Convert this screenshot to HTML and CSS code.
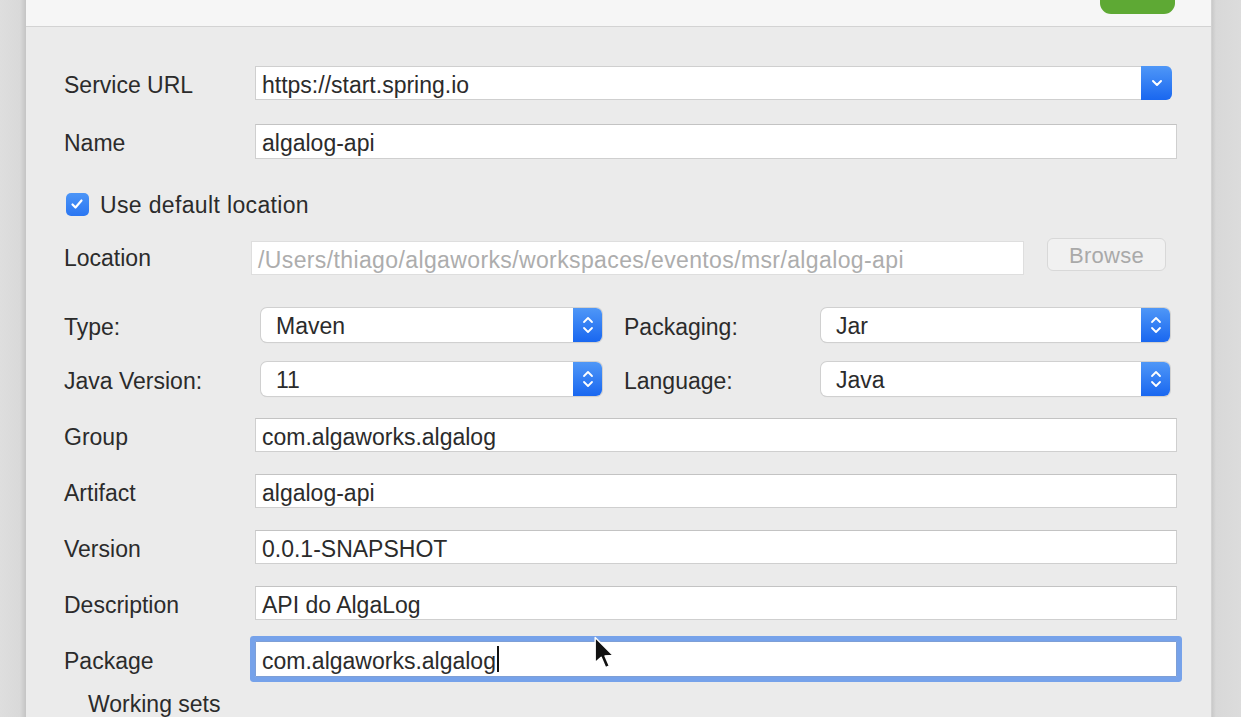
FILE: index.html
```html
<!DOCTYPE html>
<html>
<head>
<meta charset="utf-8">
<link rel="stylesheet" href="styles.css">
</head>
<body>
<div class="screen">
  <div class="side side-left"></div>
  <div class="dialog">
    <div class="header"><div class="finish-btn"></div></div>
    <div class="content">
      <div class="row r-url">
        <div class="label">Service URL</div>
        <div class="combo">
          <div class="combo-text">https://start.spring.io</div>
          <div class="combo-btn">
            <svg width="14" height="10" viewBox="0 0 14 10"><path d="M3 3 L7 7 L11 3" fill="none" stroke="#fff" stroke-width="2" stroke-linecap="round" stroke-linejoin="round"/></svg>
          </div>
        </div>
      </div>
      <div class="row r-name">
        <div class="label">Name</div>
        <div class="field">algalog-api</div>
      </div>
      <div class="row r-check">
        <div class="checkbox">
          <svg width="22" height="22" viewBox="0 0 22 22"><path d="M6.5 11.5 L9.5 14.5 L15.5 7.5" fill="none" stroke="#fff" stroke-width="2.2" stroke-linecap="round" stroke-linejoin="round"/></svg>
        </div>
        <div class="check-label">Use default location</div>
      </div>
      <div class="row r-loc">
        <div class="label loc-label">Location</div>
        <div class="field disabled loc-field">/Users/thiago/algaworks/workspaces/eventos/msr/algalog-api</div>
        <div class="browse">Browse</div>
      </div>
      <div class="row r-pop r-type">
        <div class="label pop-label">Type:</div>
        <div class="popup left-pop">
          <div class="popup-text">Maven</div>
          <div class="stepper"><svg width="14" height="22" viewBox="0 0 14 22"><path d="M3 8 L7 4 L11 8 M3 14 L7 18 L11 14" fill="none" stroke="#fff" stroke-width="1.8" stroke-linecap="round" stroke-linejoin="round"/></svg></div>
        </div>
        <div class="label pop-label2">Packaging:</div>
        <div class="popup right-pop">
          <div class="popup-text">Jar</div>
          <div class="stepper"><svg width="14" height="22" viewBox="0 0 14 22"><path d="M3 8 L7 4 L11 8 M3 14 L7 18 L11 14" fill="none" stroke="#fff" stroke-width="1.8" stroke-linecap="round" stroke-linejoin="round"/></svg></div>
        </div>
      </div>
      <div class="row r-pop r-java">
        <div class="label pop-label">Java Version:</div>
        <div class="popup left-pop">
          <div class="popup-text">11</div>
          <div class="stepper"><svg width="14" height="22" viewBox="0 0 14 22"><path d="M3 8 L7 4 L11 8 M3 14 L7 18 L11 14" fill="none" stroke="#fff" stroke-width="1.8" stroke-linecap="round" stroke-linejoin="round"/></svg></div>
        </div>
        <div class="label pop-label2">Language:</div>
        <div class="popup right-pop">
          <div class="popup-text">Java</div>
          <div class="stepper"><svg width="14" height="22" viewBox="0 0 14 22"><path d="M3 8 L7 4 L11 8 M3 14 L7 18 L11 14" fill="none" stroke="#fff" stroke-width="1.8" stroke-linecap="round" stroke-linejoin="round"/></svg></div>
        </div>
      </div>
      <div class="row r-group">
        <div class="label">Group</div>
        <div class="field">com.algaworks.algalog</div>
      </div>
      <div class="row r-field">
        <div class="label">Artifact</div>
        <div class="field">algalog-api</div>
      </div>
      <div class="row r-field">
        <div class="label">Version</div>
        <div class="field">0.0.1-SNAPSHOT</div>
      </div>
      <div class="row r-field">
        <div class="label">Description</div>
        <div class="field">API do AlgaLog</div>
      </div>
      <div class="row r-pkg">
        <div class="label">Package</div>
        <div class="field focused">com.algaworks.algalog<span class="caret"></span></div>
        <svg class="pointer" width="24" height="38" viewBox="0 0 22 34"><path d="M2 1 L2 24 L7.5 19 L11.5 28.5 L15 27 L11 17.8 L18.5 17.5 Z" fill="#111" stroke="#fff" stroke-width="1.3" stroke-linejoin="round"/></svg>
      </div>
      <div class="working">Working sets</div>
    </div>
  </div>
  <div class="side side-right"></div>
</div>
</body>
</html>
```

FILE: styles.css
```css
html, body {
  margin: 0;
  padding: 0;
  width: 1241px;
  height: 717px;
  overflow: hidden;
  font-family: "Liberation Sans", Arial, sans-serif;
  color: #2b2b2b;
}

.screen {
  display: flex;
  width: 1241px;
  height: 717px;
}

.side {
  height: 100%;
}
.side-left {
  width: 26px;
  background: linear-gradient(to right, #dedede 0, #d9d9d9 20px, #c4c4c4 26px);
}
.side-right {
  width: 29px;
  background: linear-gradient(to right, #c9c9c9 0, #d8d8d8 4px, #dcdcdc 100%);
}

.dialog {
  flex: 1;
  display: flex;
  flex-direction: column;
  background: #ebebeb;
  border-right: 1px solid #d2d2d2;
}

.header {
  height: 26px;
  flex: none;
  background: #f6f6f6;
  border-bottom: 1px solid #d3d3d3;
  display: flex;
  justify-content: flex-end;
  padding-right: 36px;
}
.finish-btn {
  width: 75px;
  height: 14px;
  background: #5ea934;
  border-radius: 0 0 11px 11px;
}

.content {
  flex: 1;
  padding: 39px 34px 0 38px;
  display: flex;
  flex-direction: column;
  font-size: 23px;
  position: relative;
}

.row {
  display: flex;
  align-items: center;
}
.label {
  width: 191px;
  flex: none;
  padding-top: 4px;
}

.field {
  flex: 1;
  height: 33px;
  box-sizing: border-box;
  background: #fff;
  border: 1px solid #cfcfcf;
  border-top-color: #c3c3c3;
  padding: 4px 6px 0;
  display: flex;
  align-items: center;
  line-height: 1;
  white-space: nowrap;
}

.r-url { height: 34px; }
.combo {
  flex: none;
  width: 917px;
  height: 34px;
  display: flex;
  box-sizing: border-box;
  background: #fff;
  border: 1px solid #cfcfcf;
  border-right: none;
  border-radius: 0 6px 6px 0;
}
.combo-text {
  flex: 1;
  display: flex;
  align-items: center;
  padding: 4px 0 0 6px;
}
.combo-btn {
  width: 31px;
  margin: -1px 0;
  background: linear-gradient(#4f97f7, #1967f0);
  border-radius: 0 6px 6px 0;
  display: flex;
  align-items: center;
  justify-content: center;
}

.r-name { margin-top: 24px; height: 35px; }
.r-name .field { height: 35px; }

.r-check { margin-top: 34px; height: 22px; }
.checkbox {
  width: 23px;
  height: 23px;
  margin-left: 2px;
  border-radius: 5px;
  background: linear-gradient(#4c95f7, #2a76f2);
  display: flex;
}
.check-label {
  margin-left: 11px;
  padding-top: 2px;
  letter-spacing: 0.35px;
}

.r-loc { margin-top: 23px; height: 37px; align-items: flex-end; }
.loc-label { width: 187px; align-self: center; }
.loc-field {
  flex: none;
  width: 773px;
  height: 34px;
  color: #adadad;
  border-color: #dedede;
  letter-spacing: 0.38px;
}
.browse {
  width: 119px;
  height: 33px;
  box-sizing: border-box;
  margin-left: 23px;
  padding-top: 2px;
  align-self: flex-start;
  border: 1px solid #d8d8d8;
  border-radius: 6px;
  background: #f1f1f1;
  color: #a9a9a9;
  font-size: 22px;
  letter-spacing: 0.3px;
  display: flex;
  align-items: center;
  justify-content: center;
}

.r-pop { height: 34px; }
.r-type { margin-top: 33px; }
.r-java { margin-top: 20px; }
.pop-label { width: 197px; }
.pop-label2 { width: 197px; margin-left: 22px; }
.popup {
  height: 34px;
  box-sizing: border-box;
  display: flex;
  background: #fff;
  border-radius: 6px;
  box-shadow: 0 0 0 1px #d0d0d0, 0 1px 1px rgba(0,0,0,0.12);
}
.left-pop { width: 341px; }
.right-pop { width: 349px; }
.popup-text {
  flex: 1;
  display: flex;
  align-items: center;
  padding: 3px 0 0 15px;
}
.stepper {
  width: 29px;
  background: linear-gradient(#4f97f7, #1967f0);
  border-radius: 0 6px 6px 0;
  display: flex;
  align-items: center;
  justify-content: center;
}

.r-group { margin-top: 22px; height: 34px; }
.r-group .field, .r-field .field { height: 34px; }
.r-field { margin-top: 22px; height: 34px; }

.r-pkg { margin-top: 21px; height: 36px; position: relative; }
.field.focused {
  height: 36px;
  border-color: #7e9fd6;
  box-shadow: 0 0 0 5px #76a2ea;
  border-radius: 1px;
}
.caret {
  display: inline-block;
  width: 2px;
  height: 26px;
  margin-top: -4px;
  background: #111;
  margin-left: 1px;
}
.pointer {
  position: absolute;
  left: 529px;
  top: -5px;
}

.working {
  margin-top: 12px;
  padding-left: 24px;
  padding-top: 2px;
}
```
